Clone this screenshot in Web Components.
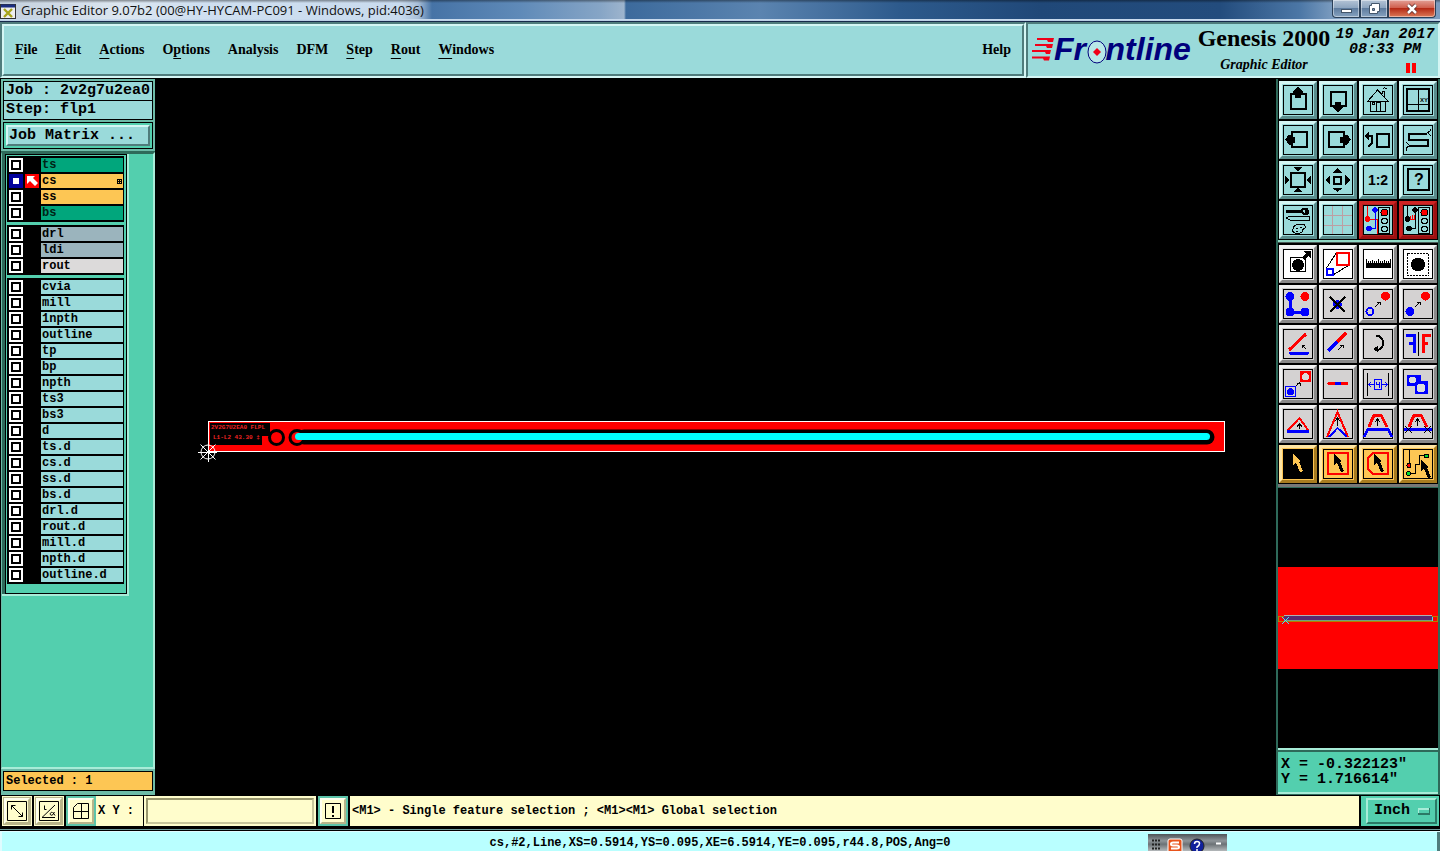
<!DOCTYPE html>
<html lang="en">
<head>
<meta charset="utf-8">
<title>Graphic Editor 9.07b2</title>
<style>
  html, body { height: 100%; margin: 0; }
  body {
    background: #000; color: #000; overflow: hidden;
    --aqua: #9adada; --teal: #53cfae; --frame: #6dbba8; --orange: #fdc654; --cream: #fffdcc;
    --lite: #d4f6f4; --dark: #4f7c7c;
    --serif: "Liberation Serif", "Times New Roman", serif;
    --mono: "Liberation Mono", "Courier New", monospace;
    font: bold 12px/14px var(--mono);
  }
</style>
</head>
<body>
<graphic-editor></graphic-editor>
<script>
const define = (name, html, setup) => {
  const tpl = document.createElement('template');
  tpl.innerHTML = '<style>*{box-sizing:border-box}:host{box-sizing:border-box}button,input,select{font:inherit;color:inherit;margin:0;border-radius:0}</style>' + html;
  customElements.define(name, class extends HTMLElement {
    constructor() {
      super();
      this.attachShadow({ mode: 'open' }).append(tpl.content.cloneNode(true));
    }
    connectedCallback() { if (setup && !this.ready) { this.ready = true; setup(this, this.shadowRoot); } }
  });
};

/* ---------- window title ---------- */
define('title-bar', `
<style>
  :host { display: flex; align-items: flex-start; height: 22px; flex: none; padding-right: 4px;
    border-bottom: 1px solid #16294a;
    background:
      linear-gradient(#0006 0, #0000 3px, #0000 19px, #cfe0f2 19px, #b4c9e0 21px),
      linear-gradient(90deg, #c3cfdd 0, #dce6f0 120px, #cfdff0 200px, #c9dbee 400px, #a9bfd8 418px, #4673a6 432px, #5f8ab8 520px, #86a5c6 600px, #9db4cd 624px, #3c6a9c 626px, #5b84b0 760px, #2d5a8c 900px, #204878 1040px, #234c7d 1220px, #4c77a6 1300px, #84a3c4 1340px, #7b9bbf 100%); }
  .ico { width: 16px; height: 16px; margin-top: 4px; flex: none; }
  .name { flex: 1; padding-left: 5px; font: 13px/21px "Open Sans", "Noto Sans", sans-serif; color: #111; white-space: nowrap; }
  .win { display: flex; }
  button { height: 18px; width: 28px; padding: 0; border: 1px solid #2b4058; border-top: 0; box-shadow: inset 0 0 0 1px #ffffff70;
    background: linear-gradient(#b4c4d6, #8ea6c0 45%, #5f7d9f 50%, #86a2c0); display: grid; place-items: center; }
  button:first-child { border-radius: 0 0 0 4px; }
  button:last-child { width: 48px; border-radius: 0 0 4px 0; background: linear-gradient(#e3a196, #d0604e 45%, #b52b16 50%, #dc7a58); }
  svg { display: block; }
</style>
<svg class="ico" viewBox="0 0 16 16"><rect x=".5" y=".5" width="15" height="14" fill="#eee" stroke="#333"/><path d="M1 2h14" stroke="#1b2d80" stroke-width="3"/><path d="M4 5l8 8M12 5l-8 8" stroke="#a7a41a" stroke-width="2.4"/></svg>
<span class="name">Graphic Editor 9.07b2 (00@HY-HYCAM-PC091 - Windows, pid:4036)</span>
<div class="win">
  <button aria-label="Minimize"><svg width="14" height="12"><rect x="2.500" y="6.500" width="10" height="3" fill="#fff" stroke="#44566b"/></svg></button>
  <button aria-label="Restore"><svg width="14" height="14"><path d="M4.500 1.500h8v8h-2v2h-8v-8h2z" fill="#fff" stroke="#44566b"/><path d="M5.500 6.500h2v2h-2z" fill="#7c96b4" stroke="#44566b"/></svg></button>
  <button aria-label="Close"><svg width="14" height="12"><path d="M3 2l8 8M11 2l-8 8" stroke="#5a2a28" stroke-width="4"/><path d="M3 2l8 8M11 2l-8 8" stroke="#fff" stroke-width="2.500"/></svg></button>
</div>`);

/* ---------- menu bar and product banner ---------- */
define('menu-bar', `
<style>
  :host { flex: 1; display: flex; border: 2px solid; border-color: var(--dark) var(--lite) var(--lite) var(--dark); }
  nav { flex: 1; display: flex; align-items: center; gap: 18px; padding: 0 11px 1px; background: var(--aqua);
    border: 2px solid; border-color: var(--lite) var(--dark) var(--dark) var(--lite); font: bold 14px/20px var(--serif); }
  button { border: 0; background: none; padding: 0; }
  button:last-child { margin-left: auto; }
  u { text-underline-offset: 4px; text-decoration-thickness: 1px; }
</style>
<nav>
  <button><u>F</u>ile</button><button><u>E</u>dit</button><button><u>A</u>ctions</button><button>O<u>p</u>tions</button>
  <button>Analysis</button><button>DFM</button><button><u>S</u>tep</button><button><u>R</u>out</button><button><u>W</u>indows</button>
  <button>Help</button>
</nav>`);

define('product-banner', `
<style>
  :host { width: 414px; flex: none; display: flex; background: var(--aqua); padding-left: 4px;
    border: 2px solid; border-color: var(--dark) var(--lite) var(--lite) var(--dark); }
  .logo { display: flex; padding-top: 7px; width: 164px; }
  .streaks { width: 22px; height: 24px; margin-top: 6px; flex: none; }
  .word { position: relative; font: italic bold 32px/36px "Liberation Sans", Arial, sans-serif; color: #00007c; }
  .word i { color: transparent; }
  .word svg { position: absolute; left: 32px; top: 8px; width: 22px; height: 26px; }
  .product { width: 136px; text-align: center; font: bold 24px/28px var(--serif); white-space: nowrap; }
  .product small { display: block; font: italic bold 14px/20px var(--serif); padding-top: 3px; }
  .clock { flex: 1; text-align: center; white-space: nowrap; font: italic bold 15px/15px var(--mono); padding-top: 3px; }
  .clock svg { display: block; margin: 6px 0 0 73px; }
</style>
<div class="logo">
  <svg class="streaks" viewBox="0 0 22 24" fill="#f00018"><path d="M5 1h17l-1 4h-5l-1-2H5zM3 7h18l-1 4h-5l-1-2H3zM0 13h19l-1 4h-4l-1-2H0zM0 19.500h18l-1 4h-5l-1-2H0z"/></svg>
  <div class="word">Fr<i>o</i>ntline
    <svg viewBox="0 0 22 26"><ellipse cx="11" cy="13" rx="9" ry="11" fill="#b8e8e8" stroke="#00007c"/><path d="M11 9l4 4-4 4-4-4z" fill="#f00018"/></svg>
  </div>
</div>
<div class="product">Genesis 2000<small>Graphic Editor</small></div>
<div class="clock">19 Jan 2017<br>08:33 PM<svg width="11" height="10" fill="red"><path d="M1 0h4v10H1zM7 0h4v10H7z"/></svg></div>`);

/* ---------- layer list ---------- */
define('layer-group', `
<style>
  :host { display: block; background: #000; padding: 2px 1px 0 2px; }
  .row { display: grid; grid-template-columns: 14px 18px 1fr; align-items: start; height: 16px; }
  input { appearance: none; width: 14px; height: 14px; border: 2px solid #fff; background: #fff; box-shadow: inset 0 0 0 2px #000; }
  .active input { border-color: #00009c; box-shadow: inset 0 0 0 2px #00009c; }
  .flag { width: 14px; height: 14px; margin-left: 2px; display: block; }
  label { height: 14px; background: var(--aqua); padding-left: 1px; line-height: 14px; display: flex; align-items: center; justify-content: space-between; }
  label svg { margin-right: 1px; }
  .g label { background: #01a67c; color: #002416; } .o label { background: var(--orange); } .b label { background: #9bb4bd; } .w label { background: #dcdada; }
</style><div id="rows"></div>`, (el, root) => {
  root.getElementById('rows').innerHTML = el.getAttribute('layers').split(' ').map((s) => {
    const [name, tone = '', active] = s.split(':');
    return `<div class="row ${tone} ${active ? 'active' : ''}"><input type="checkbox" id="l-${name}">
      <svg class="flag" viewBox="0 0 14 14">${active ? '<path fill="red" d="M0 0h14v14H0z"/><path d="M2 2h8L8 4l5 5-3 3-5-5-3 3z" fill="#fff"/>' : ''}</svg>
      <label for="l-${name}">${name}${active ? '<svg width="5" height="5" shape-rendering="crispEdges"><path d="M0 0h5v5H0zM1 1v1h1V1zM3 1v1h1V1zM1 3v1h1V3zM3 3v1h1V3z" fill-rule="evenodd"/></svg>' : ''}</label></div>`;
  }).join('');
});

define('side-panel', `
<style>
  :host { width: 155px; flex: none; display: flex; flex-direction: column; border-left: 1px solid #000; background: var(--teal); }
  .job { background: var(--frame); padding: 2px; border-bottom: 1px solid #2e6a5a; display: flex; flex-direction: column; font: bold 15px/17px var(--mono); }
  .job div { background: var(--aqua); border: 1px solid #000; padding-left: 2px; height: 20px; white-space: nowrap; }
  .job div + div { margin-top: -1px; height: 20px; }
  .matrix { border: 1px solid #000; background: var(--teal); padding: 2px; margin-top: 2px; display: flex; }
  .matrix button { flex: 1; height: 21px; padding: 0 1px; text-align: left; line-height: 15px; background: var(--aqua); border: 2px solid; border-color: var(--lite) var(--dark) var(--dark) var(--lite); }
  .list { flex: 1; border-right: 2px solid #a8ecd8; border-bottom: 2px solid #a8ecd8; border-top: 2px solid #2e6a5a; border-left: 1px solid var(--frame); }
  .pane { width: 127px; padding-left: 3px; background: #2e6a5a; border-right: 2px solid #a8ecd8; border-bottom: 2px solid #a8ecd8; }
  .inner { border: 1px solid #000; background: var(--teal); padding: 1px 2px 9px 1px; display: flex; flex-direction: column; gap: 3px; }
  .sel { background: var(--frame); padding: 2px 2px 4px; }
  .sel div { border: 1px solid #000; background: var(--orange); padding: 2px; height: 20px; }
</style>
<div class="job"><div>Job : 2v2g7u2ea0</div><div>Step: flp1</div>
  <section class="matrix"><button>Job Matrix ...</button></section></div>
<div class="list"><div class="pane"><div class="inner">
  <layer-group layers="ts:g cs:o:1 ss:o bs:g"></layer-group>
  <layer-group layers="drl:b ldi:b rout:w"></layer-group>
  <layer-group layers="cvia mill 1npth outline tp bp npth ts3 bs3 d ts.d cs.d ss.d bs.d drl.d rout.d mill.d npth.d outline.d"></layer-group>
</div></div></div>
<div class="sel"><div>Selected : 1</div></div>`);

/* ---------- drawing canvas ---------- */
define('board-canvas', `
<style>
  :host { flex: 1; min-width: 0; background: #000; display: block; }
  svg { display: block; width: 100%; height: 100%; }
  text { font: bold 6px "Liberation Mono", monospace; fill: #f02424; }
</style>
<svg viewBox="0 0 1121 716" fill="none">
  <rect x="53.500" y="342.500" width="1016" height="30" fill="red" stroke="#fff" shape-rendering="crispEdges"/>
  <path d="M55 344h60v13h-8v9H55z" fill="#000"/>
  <text x="56" y="350">2V2G7U2EA0 FLPL</text><text x="58" y="360">L1-L2 43.30 ‡</text>
  <circle cx="121.500" cy="358.500" r="7" stroke="#000" stroke-width="3" fill="red"/>
  <path d="M149 358h903" stroke="#000" stroke-width="15" stroke-linecap="round"/>
  <circle cx="142" cy="358.500" r="7" stroke="#000" stroke-width="3" fill="red"/>
  <path d="M143.500 357.500h908" stroke="#0ff" stroke-width="7" stroke-linecap="round"/>
  <g stroke="#fff"><circle cx="53" cy="373" r="7"/><path d="M43 373.500h19M53.500 363v20M45.500 365.500l15 15M60.500 365.500l-15 15"/></g>
</svg>`);

/* ---------- tool buttons ---------- */
const ptr = (x, y, c = '#000') => `<path d="M${x} ${y}l8 7-2 1 4 9-3 1-4-9-3 2z" fill="${c}" stroke="none"/>`;
const arrow = 'fill="#000" stroke="none"';
const light = `<path d="M15.500 2.500h11v26h-11z"/><circle cx="21.500" cy="7.500" r="3.500" fill="red"/><circle cx="21.500" cy="16" r="2.800"/><circle cx="21.500" cy="24" r="2.800"/>`;
const ICONS = {
  up: `<path d="M8 9h15v15H8z" stroke-width="2"/><path ${arrow} d="M15 2l5 4v3h-2v4h-6V9h-2V6z"/>`,
  down: `<path d="M8 7h15v14H8z" stroke-width="2"/><path ${arrow} d="M15 27l5-4v-2h-2v-4h-6v4h-2v2z"/>`,
  home: `<path d="M5 16l9.500-11 10.500 11zM7.500 16v10.500h15V16M13.500 26v-8.500h4V26M9.500 17.500h2v2h-2zM19.500 9V6.500h2v5M20 4l2-2M22 3h2"/>`,
  panxy: `<path d="M4 4h22v22H4z" stroke-width="2"/><path d="M15.500 4v22M4 19.500h22"/><text x="17" y="17" style="font-size:6px">XY</text>`,
  left: `<path d="M9 7h15v15H9z" stroke-width="2"/><path ${arrow} d="M2 14.500l4-5h2v2h4v6H8v2H6z"/>`,
  right: `<path d="M6 7h15v15H6z" stroke-width="2"/><path ${arrow} d="M28 14.500l-4-5h-2v2h-5v6h5v2h2z"/>`,
  back: `<path d="M14 9h12v13H14z" stroke-width="2"/><path d="M4 11h5v7l-4 4" stroke-width="2.500"/><path ${arrow} d="M1 11l5-4v8z"/>`,
  serp: `<path d="M24 8.500H6v6h19v6.500H6" stroke-width="2"/><path d="M24 8l3-2V4M25 8l3 3M6 21l-3 2v3M6 20l-3-3"/>`,
  fit: `<path d="M8 8h14v14H8z" stroke-width="2"/><path ${arrow} d="M10 2h10l-5 4zM10 27h10l-5-4zM2 10v10l4-5zM28 10v10l-5-5z"/>`,
  shrink: `<path d="M11 12h7v7h-7z" stroke-width="2"/><path ${arrow} d="M14.500 3l5 5h-10zM14.500 27l5-4h-10zM2 15l5-5v10zM27 15l-5-5v10z"/>`,
  ratio: `<text x="15" y="20" text-anchor="middle" style="font:bold 14px 'Liberation Sans',sans-serif">1:2</text>`,
  help: `<path d="M5 4h21v21H5z" stroke-width="2"/><text x="16" y="20" text-anchor="middle" style="font:bold 16px 'Liberation Sans',sans-serif">?</text>`,
  kit: `<path d="M3 6h15" stroke-width="3"/><path d="M25 3.500h-4l-3 2.500 3 3h4M25 7.500h-2v-2h2z" stroke-width="2"/><path d="M3 13l4-2h19v4H7z"/><path d="M10 24q0-5 8-5 5 0 4 4-3 1-3 4-3 2-7 1-3-1-2-4zM13 23h2M17 22h2M13 26h2"/>`,
  grid: `<path d="M9.500 1v28M19.500 1v28M1 10.500h28M1 20.500h28" stroke="#bd9ea4"/>`,
  net1: `<path d="M4.500 1v13H14v15" stroke="red"/><path d="M12 4v19H6" stroke="blue"/><g stroke="none"><circle cx="4.500" cy="14" r="2.800" fill="red"/><g fill="blue"><circle cx="12" cy="5" r="2.800"/><circle cx="6" cy="23.500" r="2.800"/></g></g>${light}`,
  net2: `<path d="M4.500 1v13M12 4v19H6"/><g stroke="none" fill="#000"><circle cx="4.500" cy="14" r="2.800"/><circle cx="12" cy="5" r="2.800"/><circle cx="6" cy="23.500" r="2.800"/></g><path d="M7 14h5M7.500 11v3M9.500 10v4M11.500 10v4" stroke="red"/>${light}`,
  resize: `<path d="M7.500 8.500h15v14h-15z"/><circle cx="15" cy="16" r="6" ${arrow}/><path d="M20 10l5-5" stroke-width="3"/><path ${arrow} d="M20 2h8v8z"/>`,
  scale: `<path d="M3.500 19L14 3M10 26l16-10"/><path d="M4 20h6v6H4z" stroke="blue" stroke-width="2"/><path d="M14 4h12v12H14z" stroke="red" stroke-width="2"/>`,
  ruler: `<path d="M2.500 16h25" stroke-width="5"/><path d="M3 10v6M5.500 12v4M7.500 12v4M9.500 11v5M11.500 12v4M13.500 12v4M15.500 10v6M17.500 12v4M19.500 12v4M21.500 11v5M23.500 12v4M25.500 12v4M27 10v6"/>`,
  select: `<path d="M4.500 4.500h21v22h-21z" stroke-dasharray="2 1"/><circle cx="15" cy="15.500" r="7" ${arrow}/>`,
  chain: `<path d="M7 7v16h15" stroke="blue" stroke-width="3"/><g stroke="none" fill="blue"><circle cx="7" cy="7.500" r="4.500"/><circle cx="7" cy="23" r="4.500"/><circle cx="22" cy="23" r="4.500"/><circle cx="22" cy="7.500" r="4.500" fill="red"/></g>`,
  del: `<circle cx="14.500" cy="15.500" r="4.500" fill="blue" stroke="none"/><path d="M7 8l15 15M22 8L7 23" stroke-width="2"/>`,
  copy: `<circle cx="7" cy="22.500" r="3.500" stroke="blue" stroke-width="2"/><circle cx="22.500" cy="7" r="4.500" fill="red" stroke="none"/><path d="M12 18l5-5M14 13h3v3"/>`,
  move: `<circle cx="7" cy="22.500" r="4.500" fill="blue" stroke="none"/><circle cx="22.500" cy="7" r="4.500" fill="red" stroke="none"/><path d="M12 18l5-5M14 13h3v3"/>`,
  angle: `<path d="M6 21L23 5" stroke="red" stroke-width="3"/><path d="M7 24h18" stroke="blue" stroke-width="3" stroke-linecap="round"/><path d="M23 20l-4-4M19 19v-3h3"/>`,
  slope: `<path d="M5 22l9-9" stroke="blue" stroke-width="3"/><path d="M14 13l9-9" stroke="red" stroke-width="3"/><path d="M15 21l5-5M17 16h3v3"/>`,
  rotate: `<path d="M13 7q7 0 7 7t-7 7" stroke-width="2"/><path ${arrow} d="M10 20l5-3v6z"/>`,
  mirror: `<path d="M3 6.500h9M6 14h5" stroke="blue" stroke-width="3"/><path d="M11 5v19" stroke="blue" stroke-width="3"/><path d="M28 6.500h-9M25 14h-6" stroke="red" stroke-width="3"/><path d="M20 5v19" stroke="red" stroke-width="3"/><path d="M15.500 3v24"/>`,
  swap: `<path d="M2.500 17.500h10v10h-10z" stroke="blue"/><circle cx="7.500" cy="22.500" r="3.500" fill="blue" stroke="none"/><path d="M17 2h11v11H17z" fill="red" stroke="none"/><circle cx="22.500" cy="7.500" r="3.500" fill="#dcdcdc" stroke="none"/><path d="M13 17l4-4M14 14h3v3"/>`,
  bar: `<path d="M6 14.500h18" stroke="red" stroke-width="3" stroke-linecap="round"/><path d="M12 14.500h6" stroke="blue" stroke-width="3"/>`,
  space: `<path d="M4.500 4v23M25.500 4v23"/><g stroke="blue"><path d="M6 15.500h5M19 15.500h5M8 13l-2.500 2.500L8 18M22 13l2.500 2.500L22 18"/><path d="M11.500 10.500h7v10h-7zM13.500 12.500v3h3M16.500 12.500v6"/></g>`,
  merge: `<path d="M4 6h14v6h7v13H12v-8H4z" fill="blue" stroke="none"/><circle cx="9.500" cy="11" r="3.500" fill="#dcdcdc" stroke="none"/><circle cx="18" cy="19" r="4.500" fill="#dcdcdc" stroke="none"/>`,
  tri: `<path d="M5 21L16.500 9 25 21" stroke="red" stroke-width="2"/><path d="M4 22h22" stroke="blue" stroke-width="3"/><path d="M16.500 15v5M14 17.500l2.500-2.500 2.500 2.500"/>`,
  peak: `<path d="M4 28L14.500 3 25 28" stroke="red" stroke-width="2"/><path d="M6 28l8.500-9 9.500 9" stroke="blue" stroke-width="2"/><path d="M14.500 9v8M12 12l2.500-3 2.500 3"/>`,
  trap: `<path d="M6 18l5-12h7l6 12" stroke="red" stroke-width="3"/><path d="M1 28l4-8h20l4 8" stroke="blue" stroke-width="3"/><path d="M14.500 10v7M12 13l2.500-3 2.500 3"/>`,
  trapx: `<path d="M6 18l5-12h7l6 12" stroke="red" stroke-width="3"/><path d="M1 20.500h28" stroke="blue" stroke-width="3"/><path d="M14.500 10v7M12 13l2.500-3 2.500 3M2 17l7 7M9 17l-7 7M21 17l7 7M28 17l-7 7"/>`,
  pick: `<path d="M1 1h28v28H1z" ${arrow}/>${ptr(10, 5, '#fdc654')}`,
  pickbox: `<path d="M5 4h20v21H5z" stroke="red" stroke-width="2"/>${ptr(11, 5)}`,
  pickpoly: `<path d="M10 4h15v21H10l-5-5V9z" stroke="red" stroke-width="2"/>${ptr(11, 5)}`,
  picknet: `<path d="M6.500 1v15M5 24.500h7v-9h4v-9h7"/><circle cx="6" cy="16.500" r="2" fill="red"/><circle cx="23.500" cy="7" r="2" fill="#0d3"/><circle cx="5.500" cy="24.500" r="2" fill="#0d3"/>${ptr(18, 11)}`,
};

define('tool-button', `
<style>
  :host { display: block; --a: var(--lite); --z: #5a8c8c; --f: var(--aqua); }
  :host([tone=white]), :host([tone=grey]) { --a: #f2f2f2; --z: #8a8a8a; --f: #cfcfcf; --i: #d4d2d2; }
  :host([tone=white]) { --i: #fff; --f: #e4e4e4; }
  :host([tone=red]) { --a: #cf2424; --z: #9c1010; --f: #b02020; --i: var(--aqua); }
  :host([tone=gold]) { --a: #ffe6a4; --z: #a87c20; --f: var(--orange); }
  button { display: block; width: 38px; height: 38px; padding: 1px; background: var(--f); border: 3px solid; border-color: var(--a) var(--z) var(--z) var(--a); }
  svg { display: block; width: 30px; height: 30px; border: 0; background: var(--i, var(--f)); box-shadow: inset 0 0 0 1px #000; fill: none; stroke: #000; }
  text { fill: #000; stroke: none; font-family: "Liberation Sans", sans-serif; }
</style><button><svg viewBox="0 0 30 30" shape-rendering="crispEdges"></svg></button>`, (el, root) => {
  root.querySelector('svg').innerHTML = ICONS[el.getAttribute('icon')];
  root.querySelector('button').setAttribute('aria-label', el.getAttribute('icon'));
});

define('tool-grid', `
<style>
  :host { display: grid; grid-template-columns: repeat(4, 38px); gap: 2px; padding: 2px 1px 1px; background: #000; }
</style><div id="mount" style="display:contents"></div>`, (el, root) => {
  root.getElementById('mount').innerHTML = el.getAttribute('tools').split(' ').map((s) => {
    const [icon, tone] = s.split(':');
    return `<tool-button icon="${icon}" tone="${tone || 'aqua'}"></tool-button>`;
  }).join('');
});

define('tool-panel', `
<style>
  :host { width: 164px; flex: none; display: flex; flex-direction: column; background: #2e6a5a; padding: 0 2px 1px; }
  .a { border-bottom: 2px solid #8fd8c4; }
  .b { border-top: 1px solid #4a5a56; border-bottom: 3px solid #777; }
  .map { flex: 1; min-height: 0; background: #000; border-top: 1px solid #2e6a5a; }
  .map svg { display: block; width: 100%; height: 100%; }
  .xy { background: var(--teal); border-top: 2px solid #a8ecd8; border-bottom: 2px solid #a8ecd8; height: 46px; flex: none;
    font: bold 15px/15px var(--mono); padding: 7px 3px; white-space: pre; box-shadow: inset 0 2px #2e6a5a; }
</style>
<tool-grid class="a" tools="up down home panxy left right back serp fit shrink ratio help kit grid net1:red net2:red"></tool-grid>
<tool-grid class="b" tools="resize:white scale:white ruler:white select:white chain:grey del:grey copy:grey move:grey angle:grey slope:grey rotate:grey mirror:grey swap:grey bar:grey space:grey merge:grey tri:grey peak:grey trap:grey trapx:grey pick:gold pickbox:gold pickpoly:gold picknet:gold"></tool-grid>
<div class="map"><svg viewBox="0 0 160 260" shape-rendering="crispEdges" fill="none">
  <path d="M0 79h160v102H0z" fill="red"/><path d="M.5 128.500h159v5H.5z" stroke="#b08000"/>
  <path d="M6 128h148v5H6z" fill="#5a2a70"/><path d="M6 127.500h148" stroke="#b0b0b0"/><path d="M6 132.500h148" stroke="#70a080"/>
  <path d="M4 129l7 7M11 129l-7 7M154 129v4" stroke="#40e0ff"/></svg></div>
<div class="xy">X = -0.322123"
Y = 1.716614"</div>`);

/* ---------- command line ---------- */
define('command-bar', `
<style>
  :host { display: flex; flex: none; height: 34px; padding: 1px 1px 3px 2px; background: #000; gap: 2px; }
  .tb { width: 30px; display: grid; place-items: center; background: var(--cream); border: 0; padding: 0; }
  .tb svg { width: 26px; height: 26px; border: 2px solid; border-color: #fffff0 #b8b48a #b8b48a #fffff0; outline: 1px solid #b8b48a; background: var(--cream); fill: none; stroke: #000; display: block; }
  .on { background: #5cc4aa; } .on svg { outline: 0; }
  label { width: 47px; margin-left: -2px; padding-left: 2px; background: var(--cream); line-height: 30px; white-space: pre; }
  .field { width: 172px; display: flex; background: var(--cream); padding: 2px; margin-left: -1px; }
  input { flex: 1; min-width: 0; padding: 0 4px; background: var(--cream); border: 2px solid; border-color: #98966c #c8c69c #c8c69c #98966c; outline: 0; }
  .msg { flex: 1; background: var(--cream); line-height: 30px; padding-left: 2px; white-space: nowrap; }
  .unit { width: 78px; background: var(--teal); padding: 2px; display: flex; padding-left: 5px; }
  select { flex: 1; appearance: none; font: bold 15px/22px var(--mono); padding: 0 6px; border: 2px solid; border-color: #a8ecd8 #2b7a66 #2b7a66 #a8ecd8;
    background: linear-gradient(#a8ecd8, #a8ecd8) 50px 8px/11px 2px no-repeat, linear-gradient(#2b7a66, #2b7a66) 50px 13px/12px 2px no-repeat,
      linear-gradient(#a8ecd8, #a8ecd8) 50px 8px/1px 6px no-repeat, linear-gradient(#2b7a66, #2b7a66) 61px 8px/1px 7px no-repeat, var(--teal); }
</style>
<button class="tb" aria-label="Diagonal snap"><svg viewBox="0 0 22 22"><path d="M1.500 1.500h19v19h-19zM5.500 5.500l11 11M5.500 9.500v-4h4M16.500 12.500v4h-4"/></svg></button>
<button class="tb" aria-label="Angle snap"><svg viewBox="0 0 22 22"><path d="M1.500 1.500h19v19h-19zM4 17.500h13M4 17.500L17 5M6.500 5.500v4h2M14.500 12.500c-3-1-3 4 0 2.500l2-3M15 12.500l2 3"/></svg></button>
<button class="tb on" aria-label="Grid snap"><svg viewBox="0 0 22 22"><path d="M3.500 7.500l4-4h11v15h-15zM3.500 11.500h15M11.500 3.500v15"/></svg></button>
<label for="xy">X Y :</label>
<div class="field"><input id="xy" type="text"></div>
<button class="tb on" aria-label="Execute"><svg viewBox="0 0 22 22"><path d="M3.500 3.500h15v15h-15z"/><path d="M11 6v7M11 15v2" stroke-width="2"/></svg></button>
<div class="msg">&lt;M1&gt; - Single feature selection ; &lt;M1&gt;&lt;M1&gt; Global selection</div>
<div class="unit"><select aria-label="Units"><option>Inch</option><option>mm</option></select></div>`);

define('status-bar', `
<style>
  :host { display: block; position: relative; flex: none; height: 22px; background: #b9ffff; text-align: center; line-height: 20px; padding-top: 3px;
    border-top: 1px solid #6f9c9c; box-shadow: inset 0 1px #000, inset 2px 2px #dffcff, inset -3px 0 #4f7c7c; white-space: nowrap; }
  .tray { position: absolute; right: 213px; bottom: 0; width: 79px; height: 17px; background: linear-gradient(#4e5458, #8e9498 40%, #6c7276 60%, #b4b8ba); }
  .tray svg { display: block; }
</style>
cs,#2,Line,XS=0.5914,YS=0.095,XE=6.5914,YE=0.095,r44.8,POS,Ang=0
<div class="tray"><svg width="79" height="17" fill="none">
  <path d="M4 6.500h9M4 10.500h9M4 14.500h9" stroke="#222" stroke-width="2" stroke-dasharray="2 1"/>
  <rect x="20" y="5" width="14" height="14" rx="2" fill="#e8541c" stroke="#fff"/><path d="M31 8.500h-6q-2 0-2 1.500t2 1.500h4q2 0 2 1.500t-2 1.500h-6" stroke="#fff" stroke-width="2"/>
  <circle cx="49" cy="12" r="7" fill="#10209c" stroke="#222"/><path d="M46.500 10q0-2.500 2.500-2.500t2.500 2-2.500 3.500v1M49 15v2" stroke="#fff" stroke-width="1.500"/>
  <path d="M68 9.500h5" stroke="#fff" stroke-width="2"/></svg></div>`);

define('graphic-editor', `
<style>
  :host { display: flex; flex-direction: column; height: 100vh; background: #000; }
  header { display: flex; height: 56px; flex: none; margin-bottom: 1px; }
  main { flex: 1; display: flex; min-height: 0; }
</style>
<title-bar></title-bar>
<header><menu-bar></menu-bar><product-banner></product-banner></header>
<main><side-panel></side-panel><board-canvas></board-canvas><tool-panel></tool-panel></main>
<command-bar></command-bar>
<status-bar></status-bar>`);
</script>
</body>
</html>
